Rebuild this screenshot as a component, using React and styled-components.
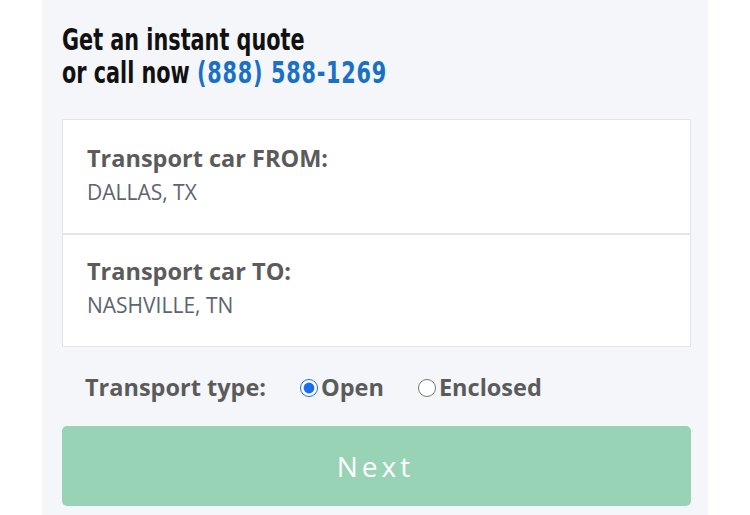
import React, { useState } from 'react';
import styled, { createGlobalStyle } from 'styled-components';

const GlobalStyle = createGlobalStyle`
  html, body {
    margin: 0;
    padding: 0;
    background: #ffffff;
  }
  body {
    font-family: "Open Sans", "Liberation Sans", sans-serif;
  }
`;

const Page = styled.div`
  display: flex;
  padding-left: 42px;
  min-height: 515px;
`;

const Panel = styled.div`
  width: 666px;
  box-sizing: border-box;
  background: #f4f6fa;
  padding: 23px 17px 8px 20px;
  display: flex;
  flex-direction: column;
`;

// condensed display heading (Oswald-like), squeezed horizontally
const Heading = styled.h2`
  margin: 0 0 30px;
  font-family: "DejaVu Sans Condensed", "DejaVu Sans", sans-serif;
  font-weight: 700;
  font-size: 31px;
  line-height: 33px;
  color: #111111;
  transform: scaleX(0.745);
  transform-origin: left top;
  white-space: nowrap;
`;

const Phone = styled.a`
  color: #1a70c5;
  text-decoration: none;
  letter-spacing: 1px;
`;

const Card = styled.div`
  background: #ffffff;
  border: 1px solid #e2e5ea;
`;

const Field = styled.div`
  padding: ${(p) => (p.$first ? '23px' : '21px')} 24px 26px;
  border-top: ${(p) => (p.$first ? 'none' : '2px solid #e2e5ea')};
`;

const Label = styled.div`
  font-weight: 700;
  font-size: 23.5px;
  line-height: 30px;
  color: #5b5b5b;
`;

const Value = styled.div`
  margin-top: 4px;
  font-size: 21px;
  line-height: 30px;
  color: #5d6470;
`;

const TypeRow = styled.div`
  display: flex;
  align-items: center;
  margin: 20px 0 19px;
  padding-left: 23px;
  height: 40px;
`;

const TypeLabel = styled.span`
  font-weight: 700;
  font-size: 23.5px;
  line-height: 40px;
  color: #5b5b5b;
  margin-right: 34px;
`;

const Option = styled.label`
  display: flex;
  align-items: center;
  font-weight: 700;
  font-size: 23.5px;
  line-height: 40px;
  color: #5b5b5b;
  margin-right: 34px;
  cursor: pointer;
`;

const Radio = styled.input`
  margin: 2px 3px 0 0;
  width: 18px;
  height: 18px;
  accent-color: #1a6cf0;
`;

const NextButton = styled.button`
  width: 100%;
  height: 80px;
  border: none;
  border-radius: 5px;
  background: #98d3b5;
  color: #ffffff;
  font-family: "Open Sans", "Liberation Sans", sans-serif;
  font-size: 28px;
  letter-spacing: 4px;
  padding-left: 4px;
  cursor: pointer;
`;

export default function App() {
  const [type, setType] = useState('open');

  return (
    <>
      <GlobalStyle />
      <Page>
        <Panel>
          <Heading>
            Get an instant quote
            <br />
            or call now <Phone href="#">(888) 588-1269</Phone>
          </Heading>
          <Card>
            <Field $first>
              <Label>Transport car FROM:</Label>
              <Value>DALLAS, TX</Value>
            </Field>
            <Field>
              <Label>Transport car TO:</Label>
              <Value>NASHVILLE, TN</Value>
            </Field>
          </Card>
          <TypeRow>
            <TypeLabel>Transport type:</TypeLabel>
            <Option>
              <Radio
                type="radio"
                name="type"
                checked={type === 'open'}
                onChange={() => setType('open')}
              />
              Open
            </Option>
            <Option>
              <Radio
                type="radio"
                name="type"
                checked={type === 'enclosed'}
                onChange={() => setType('enclosed')}
              />
              Enclosed
            </Option>
          </TypeRow>
          <NextButton>Next</NextButton>
        </Panel>
      </Page>
    </>
  );
}
